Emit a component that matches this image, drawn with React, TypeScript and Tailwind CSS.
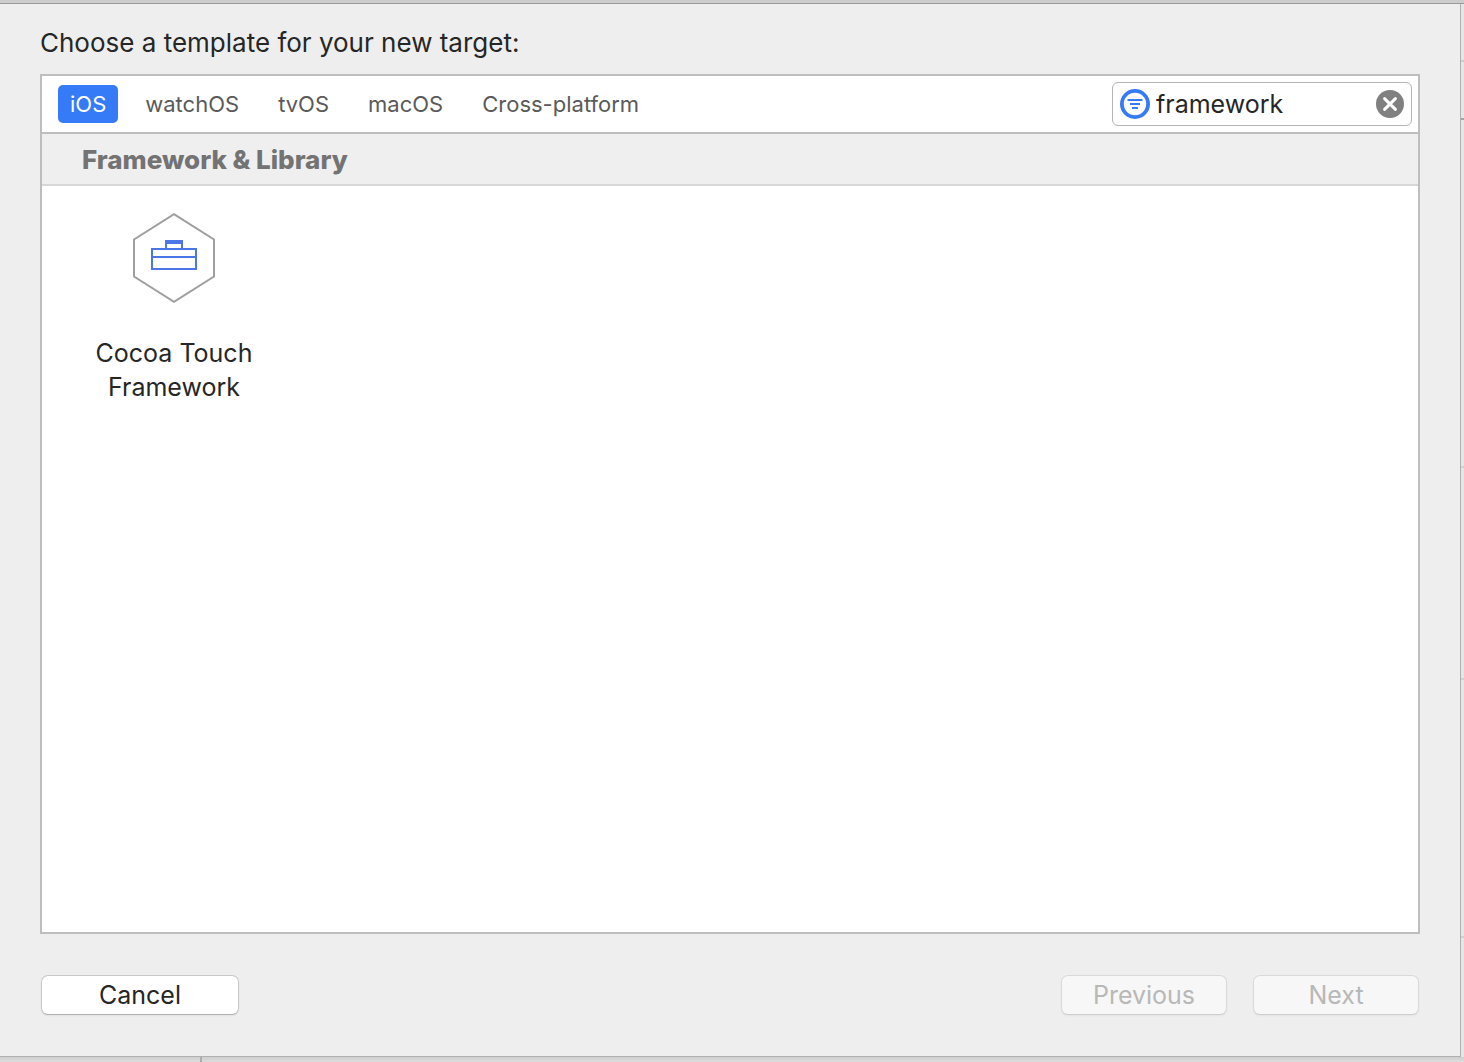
import { useState } from "react";

const platforms = ["iOS", "watchOS", "tvOS", "macOS", "Cross-platform"];

function FilterIcon() {
  return (
    <svg className="size-[30px] shrink-0" viewBox="0 0 30 30" fill="none" stroke="#357af6" aria-hidden="true">
      <circle cx="15" cy="15" r="13.1" strokeWidth="3.8" />
      <path d="M7.5 11h15M10 15h10M12 19h6" strokeWidth="2" />
    </svg>
  );
}

function ClearIcon() {
  return (
    <svg className="size-7" viewBox="0 0 28 28" aria-hidden="true">
      <circle cx="14" cy="14" r="14" fill="#808080" />
      <path d="M8.6 8.6l10.8 10.8M19.4 8.6L8.6 19.4" stroke="#fff" strokeWidth="3" strokeLinecap="round" />
    </svg>
  );
}

function ToolboxIcon() {
  return (
    <svg className="h-[90px] w-[82px]" viewBox="0 0 82 90" fill="none" aria-hidden="true">
      <path d="M41 1.2L81 26.5V63.5L41 88.8L1 63.5V26.5Z" stroke="#9f9f9f" strokeWidth="2" />
      <path d="M19 36H63V56H19ZM19 44H63M33 36V28H49V36" stroke="#4c76e8" strokeWidth="2" />
      <path d="M32 27H50V31H32Z" fill="#4c76e8" />
    </svg>
  );
}

export default function App() {
  const [platform, setPlatform] = useState("iOS");
  const [query, setQuery] = useState("framework");

  return (
    <div className="flex min-h-screen flex-col bg-[#e2e2e2] font-['Inter',sans-serif] text-[#262626]">
      <div className="h-1 border-b border-[#9b9b9b] bg-[#cccccc]" />
      <div className="flex flex-1">
        <main className="flex flex-1 flex-col border-r border-b border-[#b0b0b0] bg-[#eeeeee] px-10 pb-[41px]">
          <h1 className="pt-[23px] pb-[15px] text-[26px] leading-8">Choose a template for your new target:</h1>

          <section className="flex flex-1 flex-col border-2 border-[#bebebe] bg-white">
            <div className="flex items-center justify-between border-b-2 border-[#bebebe] py-[6px] pr-[6px] pl-4">
              <nav className="flex gap-[15px]" aria-label="Platform">
                {platforms.map((name) => (
                  <button
                    key={name}
                    type="button"
                    aria-pressed={name === platform}
                    onClick={() => setPlatform(name)}
                    className={
                      name === platform
                        ? "h-[38px] rounded-[5px] bg-[#357af6] px-3 text-[22px] text-white"
                        : "h-[38px] rounded-[5px] px-3 text-[22px] text-[#5a5a5a]"
                    }
                  >
                    {name}
                  </button>
                ))}
              </nav>
              <div className="flex h-11 w-[300px] items-center gap-[6px] rounded-md border border-[#b5b5b5] bg-white px-[7px]">
                <FilterIcon />
                <input
                  type="text"
                  aria-label="Filter"
                  value={query}
                  onChange={(e) => setQuery(e.target.value)}
                  className="min-w-0 flex-1 bg-transparent text-[25px] leading-8 outline-none"
                />
                <button type="button" aria-label="Clear filter" onClick={() => setQuery("")}>
                  <ClearIcon />
                </button>
              </div>
            </div>

            <h2 className="border-b-2 border-[#d8d8d8] bg-[#efefef] pt-[10px] pb-2 pl-10 text-[26px] leading-8 font-extrabold text-[#737373]">
              Framework &amp; Library
            </h2>

            <div className="flex flex-wrap px-8 pt-[27px]">
              <button type="button" className="flex w-[200px] flex-col items-center gap-[33px] text-[25px] leading-[34px]">
                <ToolboxIcon />
                <span className="w-[180px]">Cocoa Touch Framework</span>
              </button>
            </div>
          </section>

          <footer className="flex items-center gap-[26px] px-px pt-[41px]">
            <button
              type="button"
              className="mr-auto h-10 w-[198px] rounded-[7px] border border-[#c8c8c8] border-b-[#b0b0b0] bg-white text-[25px] leading-8 shadow-xs"
            >
              Cancel
            </button>
            <button
              type="button"
              disabled
              className="h-10 w-[166px] rounded-[7px] border border-[#dadada] border-b-[#cecece] bg-[#f7f7f7] text-[25px] leading-8 text-[#b8b8b8] shadow-xs"
            >
              Previous
            </button>
            <button
              type="button"
              disabled
              className="h-10 w-[166px] rounded-[7px] border border-[#dadada] border-b-[#cecece] bg-[#f7f7f7] text-[25px] leading-8 text-[#b8b8b8] shadow-xs"
            >
              Next
            </button>
          </footer>
        </main>
        <div className="flex w-[3px] flex-col bg-[#e6e6e6]" aria-hidden="true">
          <div className="h-[58px] border-b-2 border-[#cccccc]" />
          <div className="h-[58px] border-b-2 border-[#a4a4a4]" />
          <div className="h-[348px] border-b-2 border-[#d0d0d0]" />
          <div className="h-[212px] border-b-2 border-[#d0d0d0]" />
          <div className="h-[258px] border-b-2 border-[#d0d0d0]" />
        </div>
      </div>
      <div className="h-[5px] bg-linear-to-b from-[#cecece] to-[#dddddd]" aria-hidden="true">
        <div className="h-full w-[202px] border-r-2 border-[#adadad]" />
      </div>
    </div>
  );
}
